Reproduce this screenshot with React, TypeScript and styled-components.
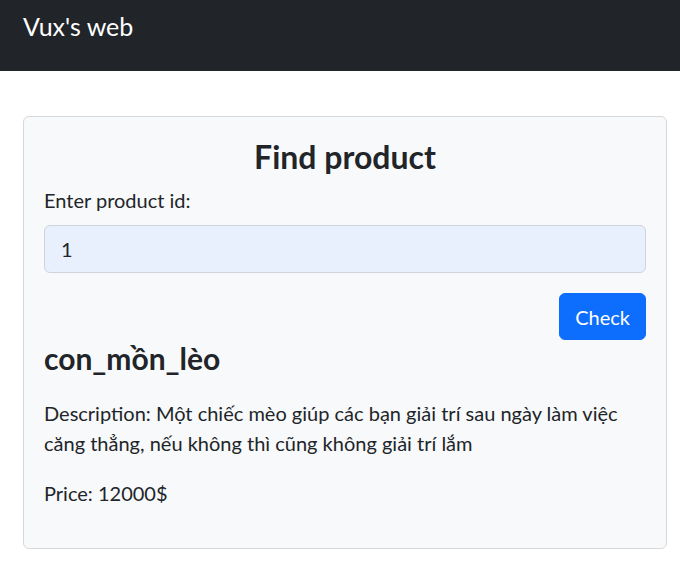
import styled, { createGlobalStyle } from 'styled-components';

const GlobalStyle = createGlobalStyle`
  body {
    margin: 0;
    background: #fff;
    font-family: Lato, "Noto Sans", sans-serif;
    color: #212529;
    font-size: 20px;
    line-height: 1.5;
  }
  * { box-sizing: border-box; }
`;

const Navbar = styled.nav`
  height: 71px;
  background: #212529;
  padding: 11px 23px 0;
`;

const Brand = styled.a`
  color: #fff;
  font-size: 25px;
  line-height: 30px;
  text-decoration: none;
`;

const Main = styled.main`
  padding: 45px 13px 0 23px;
`;

const Card = styled.section`
  background: #f8f9fa;
  border: 1px solid #d6d8da;
  border-radius: 6px;
  padding: 20px;
`;

const Title = styled.h2`
  margin: 0 0 8px;
  text-align: center;
  font-size: 32px;
  font-weight: 700;
  line-height: 40px;
`;

const Label = styled.label`
  display: block;
  margin-bottom: 10px;
`;

const Input = styled.input`
  display: block;
  width: 100%;
  height: 48px;
  padding: 0 16px;
  font: inherit;
  color: #212529;
  background: #e8f0fe;
  border: 1px solid #ced4da;
  border-radius: 6px;
  outline: none;
`;

const Actions = styled.div`
  display: flex;
  justify-content: flex-end;
  margin-top: 20px;
`;

const Button = styled.button`
  height: 47px;
  padding: 0 15px;
  font: inherit;
  color: #fff;
  background: #0d6efd;
  border: 1px solid #0d6efd;
  border-radius: 6px;
  cursor: pointer;
`;

const Name = styled.h3`
  margin: 0 0 22px;
  font-size: 30px;
  font-weight: 700;
  line-height: 36px;
`;

const Text = styled.p`
  margin: 0 0 20px;
`;

export default function App() {
  return (
    <>
      <GlobalStyle />
      <Navbar>
        <Brand href="#">Vux's web</Brand>
      </Navbar>
      <Main>
        <Card>
          <Title>Find product</Title>
          <Label htmlFor="pid">Enter product id:</Label>
          <Input id="pid" defaultValue="1" />
          <Actions>
            <Button>Check</Button>
          </Actions>
          <Name>con_mồn_lèo</Name>
          <Text>
            Description: Một chiếc mèo giúp các bạn giải trí sau ngày làm việc căng thẳng, nếu không thì cũng không giải trí lắm
          </Text>
          <Text>Price: 12000$</Text>
        </Card>
      </Main>
    </>
  );
}
